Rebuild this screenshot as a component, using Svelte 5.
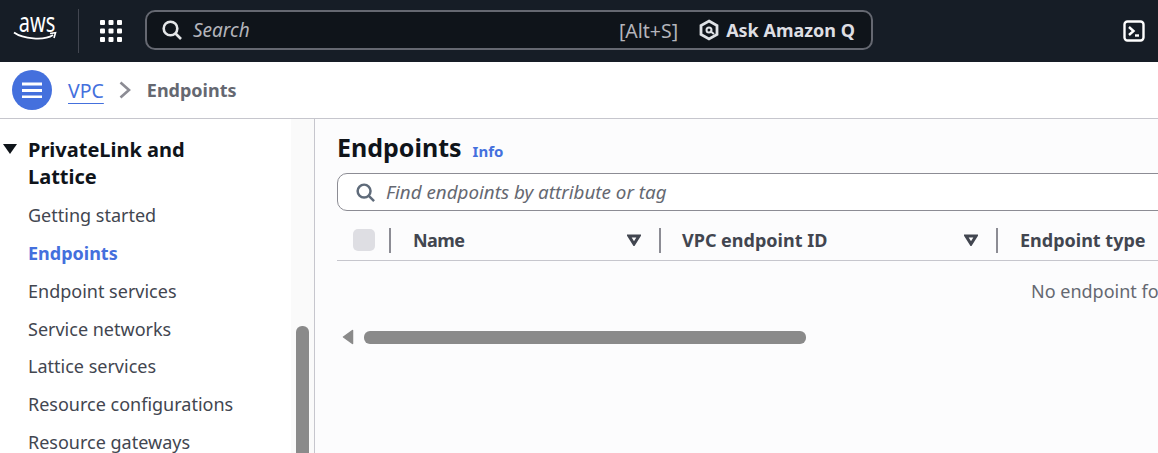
<script>
  const navItems = ['Getting started', 'Endpoints', 'Endpoint services', 'Service networks', 'Lattice services', 'Resource configurations', 'Resource gateways'];
</script>

<div class="page">
  <header class="topbar">
    <div class="logo">
      <span class="aws">aws</span>
      <svg class="smile" viewBox="0 0 44 11" width="44" height="11"><path d="M1 1.500C10 8 31 10 40 4" fill="none" stroke="#fff" stroke-width="1.800"/><path d="M37 2.500L42.500 1.800L41 7" fill="none" stroke="#fff" stroke-width="1.600"/></svg>
    </div>
    <div class="vsep"></div>
    <svg class="grid" viewBox="0 0 22 22" width="22" height="22" fill="#fff">
      {#each [0,8.500,17] as y}{#each [0,8.500,17] as x}<rect x={x} y={y} width="5" height="5" rx="1"/>{/each}{/each}
    </svg>
    <div class="searchbox">
      <svg viewBox="0 0 20 20" width="20" height="20" fill="none" stroke="#e4e6e8" stroke-width="2.600"><circle cx="8.500" cy="8.500" r="6.800"/><path d="M13.500 13.500L19 19"/></svg>
      <span class="ph">Search</span>
      <span class="short">[Alt+S]</span>
      <svg class="q" viewBox="0 0 20 22" width="20" height="22" fill="none" stroke="#dfe2e6" stroke-width="2.800"><path d="M10 2L18 6.500V15.500L10 20L2 15.500V6.500Z"/><circle cx="10" cy="11" r="2.500" stroke-width="2"/><path d="M11 12L15 15" stroke-width="2"/></svg>
      <span class="ask">Ask Amazon Q</span>
    </div>
    <svg class="term" viewBox="0 0 22 22" width="22" height="22" fill="none" stroke="#fff" stroke-width="2.400"><rect x="1.500" y="1.500" width="19" height="19" rx="3"/><path d="M6 7L10.500 11L6 15"/><path d="M12 15.500H16"/></svg>
  </header>

  <div class="crumbs">
    <button class="burger" aria-label="Menu">
      <svg viewBox="0 0 20 16" width="20" height="16" stroke="#fff" stroke-width="3"><path d="M0 2H20M0 8.500H20M0 15H20"/></svg>
    </button>
    <a class="vpc" href="#vpc">VPC</a>
    <svg class="chev" viewBox="0 0 12 18" width="12" height="18" fill="none" stroke="#8c8c94" stroke-width="2.600"><path d="M1.500 1.500L10 9L1.500 16.500"/></svg>
    <span class="current">Endpoints</span>
  </div>

  <div class="body">
    <aside class="side">
      <nav class="nav">
        <div class="section">
          <svg viewBox="0 0 14 10" width="14" height="10" fill="#0f141a"><path d="M0 0H14L7 10Z"/></svg>
          <span>PrivateLink and Lattice</span>
        </div>
        <ul>
          {#each navItems as item}
            <li class:active={item === 'Endpoints'}>{item}</li>
          {/each}
        </ul>
      </nav>
      <div class="vscroll">
        <svg viewBox="0 0 15 12" width="15" height="12" fill="#8a8a8a" stroke="#8a8a8a" stroke-width="1.500" stroke-linejoin="round"><path d="M7.500 1.500L14 11H1Z"/></svg>
        <div class="vthumb"></div>
      </div>
    </aside>

    <main class="main">
      <div class="title">
        <h1>Endpoints</h1>
        <a href="#info">Info</a>
      </div>
      <div class="filter">
        <svg viewBox="0 0 20 20" width="19" height="19" fill="none" stroke="#5f6b7a" stroke-width="2.600"><circle cx="8.500" cy="8.500" r="6.800"/><path d="M13.500 13.500L19 19"/></svg>
        <span>Find endpoints by attribute or tag</span>
      </div>
      <div class="thead">
        <div class="check"><span class="box"></span></div>
        <div class="th name"><span>Name</span><svg viewBox="0 0 14 12" width="14" height="12" fill="none" stroke="#424650" stroke-width="3"><path d="M2 2H12L7 10Z"/></svg></div>
        <div class="th id"><span>VPC endpoint ID</span><svg viewBox="0 0 14 12" width="14" height="12" fill="none" stroke="#424650" stroke-width="3"><path d="M2 2H12L7 10Z"/></svg></div>
        <div class="th type"><span>Endpoint type</span></div>
      </div>
      <div class="empty">No endpoint found</div>
      <div class="hscroll">
        <svg viewBox="0 0 12 16" width="12" height="16" fill="#8a8a8a" stroke="#8a8a8a" stroke-width="1.500" stroke-linejoin="round"><path d="M10.500 1.500V14.500L1.500 8Z"/></svg>
        <div class="hthumb"></div>
      </div>
    </main>
  </div>
</div>

<style>
  :global(body) {
    margin: 0;
    background: #fff;
  }
  .page {
    width: 1158px;
    height: 453px;
    overflow: hidden;
    font-family: "Noto Sans", sans-serif;
    display: flex;
    flex-direction: column;
  }
  .topbar {
    height: 62px;
    flex: none;
    background: #161d26;
    display: flex;
    align-items: center;
    padding-left: 13px;
    padding-right: 13px;
    box-sizing: border-box;
  }
  .logo {
    width: 44px;
    height: 34px;
    position: relative;
    flex: none;
    margin-bottom: 10px;
  }
  .aws {
    display: block;
    color: #fff;
    font-size: 27px;
    line-height: 26px;
    text-align: center;
    transform: scaleX(0.74);
    transform-origin: center;
  }
  .smile {
    position: absolute;
    left: 0;
    top: 22px;
  }
  .vsep {
    width: 1px;
    height: 44px;
    background: #424650;
    margin-left: 21px;
    margin-right: 21px;
    flex: none;
  }
  .grid {
    flex: none;
    margin-right: 23px;
  }
  .searchbox {
    width: 728px;
    height: 40px;
    box-sizing: border-box;
    flex: none;
    background: #0f141a;
    border: 2px solid #656871;
    border-radius: 10px;
    display: flex;
    align-items: center;
    padding-left: 15px;
    padding-right: 16px;
    margin-bottom: 2px;
  }
  .ph {
    color: #b4b4bb;
    font-style: italic;
    font-size: 19px;
    margin-left: 11px;
  }
  .short {
    margin-left: auto;
    color: #b4b4bb;
    font-size: 19.500px;
  }
  .q {
    margin-left: 21px;
    margin-right: 7px;
  }
  .ask {
    color: #dedee3;
    font-weight: 700;
    font-size: 18px;
  }
  .term {
    margin-left: auto;
  }
  .crumbs {
    height: 57px;
    flex: none;
    box-sizing: border-box;
    border-bottom: 1px solid #c6c6cd;
    display: flex;
    align-items: center;
    padding-left: 12px;
    background: #fff;
  }
  .burger {
    width: 40px;
    height: 40px;
    border-radius: 50%;
    background: #4470dd;
    border: none;
    padding: 0;
    display: flex;
    align-items: center;
    justify-content: center;
    margin-right: 16px;
  }
  .vpc {
    color: #4470dd;
    font-size: 19.500px;
    text-decoration: underline;
    text-underline-offset: 5px;
  }
  .chev {
    margin-left: 15px;
    margin-right: 16px;
  }
  .current {
    color: #656871;
    font-weight: 700;
    font-size: 18px;
  }
  .body {
    flex: 1;
    min-height: 0;
    display: flex;
  }
  .side {
    width: 315px;
    flex: none;
    box-sizing: border-box;
    border-right: 1px solid #c6c6cd;
    display: flex;
    overflow: hidden;
  }
  .nav {
    width: 291px;
    flex: none;
    box-sizing: border-box;
    padding-top: 17px;
  }
  .section {
    display: flex;
    gap: 11px;
    font-size: 20px;
    line-height: 27px;
    font-weight: 700;
    color: #0f141a;
    padding-left: 3px;
    width: 220px;
  }
  .section svg {
    flex: none;
    margin-top: 8px;
  }
  ul {
    list-style: none;
    margin: 7px 0 0;
    padding: 0 0 0 28px;
  }
  li {
    font-size: 18px;
    line-height: 37.850px;
    color: #424650;
    white-space: nowrap;
  }
  li.active {
    color: #4470dd;
    font-weight: 700;
  }
  .vscroll {
    flex: 1;
    background: #fafafa;
    display: flex;
    flex-direction: column;
    align-items: center;
    padding-top: 6px;
  }
  .vthumb {
    width: 13px;
    height: 160px;
    background: #8a8a8a;
    border-radius: 6px;
    margin-top: 201px;
    flex: none;
  }
  .main {
    flex: 1;
    min-width: 0;
    background: #fcfcfd;
    padding-left: 22px;
    overflow: hidden;
  }
  .title {
    display: flex;
    align-items: baseline;
    gap: 11px;
    height: 54px;
    padding-top: 9px;
    box-sizing: border-box;
  }
  h1 {
    margin: 0;
    font-size: 25px;
    line-height: 38px;
    font-weight: 700;
    color: #0f141a;
  }
  .title a {
    color: #4470dd;
    font-size: 15px;
    font-weight: 700;
    text-decoration: none;
  }
  .filter {
    width: 900px;
    height: 38px;
    box-sizing: border-box;
    background: #fff;
    border: 1px solid #8c8c94;
    border-radius: 10px;
    display: flex;
    align-items: center;
    gap: 11px;
    padding-left: 18px;
    font-style: italic;
    font-size: 18.800px;
    color: #656871;
  }
  .thead {
    width: 900px;
    height: 50px;
    box-sizing: border-box;
    border-bottom: 1px solid #c6c6cd;
    padding-top: 9px;
    display: flex;
    align-items: center;
  }
  .check {
    width: 52px;
    height: 25px;
    flex: none;
    display: flex;
    align-items: center;
    padding-left: 16px;
    box-sizing: border-box;
  }
  .box {
    width: 22px;
    height: 22px;
    background: #dedee3;
    border-radius: 5px;
  }
  .th {
    height: 25px;
    border-left: 2px solid #8c8c94;
    box-sizing: border-box;
    flex: none;
    display: flex;
    align-items: center;
    justify-content: space-between;
    font-size: 18px;
    font-weight: 700;
    color: #424650;
    padding-left: 21px;
    padding-right: 18px;
  }
  .name { width: 270px; padding-left: 22px; }
  .name span { letter-spacing: -0.6px; }
  .id { width: 337px; }
  .type { width: 200px; padding-left: 22px; }
  .empty {
    width: 900px;
    padding-left: 694px;
    box-sizing: border-box;
    height: 62px;
    padding-top: 16px;
    font-size: 18px;
    line-height: 28px;
    color: #656871;
    white-space: nowrap;
  }
  .hscroll {
    display: flex;
    align-items: center;
    gap: 10px;
    padding-left: 5px;
    margin-top: 6px;
  }
  .hthumb {
    width: 442px;
    height: 13px;
    background: #8a8a8a;
    border-radius: 6px;
  }
</style>
